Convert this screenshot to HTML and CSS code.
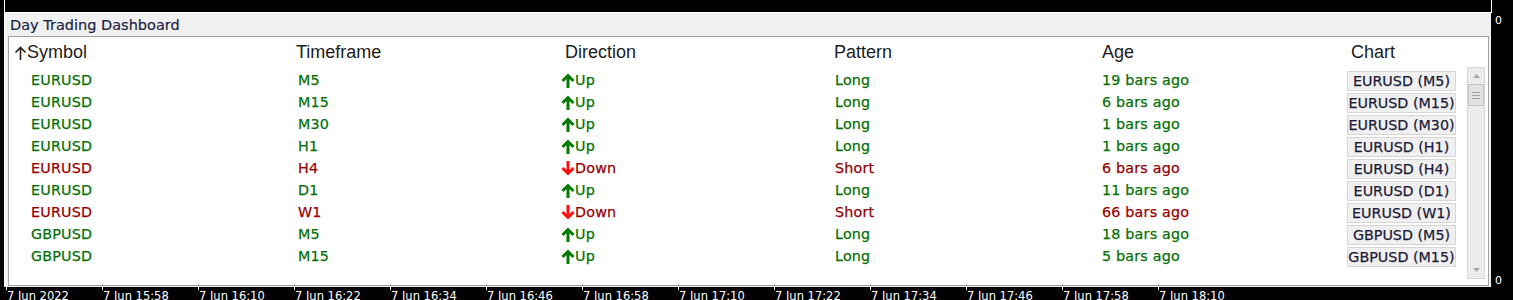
FILE: index.html
```html
<!DOCTYPE html>
<html>
<head>
<meta charset="utf-8">
<link rel="stylesheet" href="styles.css">
</head>
<body>
<div class="screen">
  <div class="main">
    <div class="frame">
      <div class="chart-top"></div>
      <div class="panel">
        <div class="title">Day Trading Dashboard</div>
        <div class="box">
          <div class="grid head">
            <div class="c c1"><svg class="sort" viewBox="0 0 13 16" width="13" height="16"><path d="M6.5 15V2.5M1.5 7.5L6.5 2.5L11.5 7.5" fill="none" stroke="#2a2018" stroke-width="1.6"/></svg>Symbol</div>
            <div class="c c2">Timeframe</div>
            <div class="c c3">Direction</div>
            <div class="c c4">Pattern</div>
            <div class="c c5">Age</div>
            <div class="c c6">Chart</div>
          </div>
          <div class="body">
            <div class="rows">
              <div class="grid row up"><div class="c c1">EURUSD</div><div class="c c2">M5</div><div class="c c3"><svg class="arr" viewBox="0 0 14 15" width="14" height="15"><path d="M7 15V2.5M1.5 8L7 2.5L12.5 8" fill="none" stroke-width="3"/></svg>Up</div><div class="c c4">Long</div><div class="c c5">19 bars ago</div><div class="c c6"><span class="btn">EURUSD (M5)</span></div></div>
              <div class="grid row up"><div class="c c1">EURUSD</div><div class="c c2">M15</div><div class="c c3"><svg class="arr" viewBox="0 0 14 15" width="14" height="15"><path d="M7 15V2.5M1.5 8L7 2.5L12.5 8" fill="none" stroke-width="3"/></svg>Up</div><div class="c c4">Long</div><div class="c c5">6 bars ago</div><div class="c c6"><span class="btn">EURUSD (M15)</span></div></div>
              <div class="grid row up"><div class="c c1">EURUSD</div><div class="c c2">M30</div><div class="c c3"><svg class="arr" viewBox="0 0 14 15" width="14" height="15"><path d="M7 15V2.5M1.5 8L7 2.5L12.5 8" fill="none" stroke-width="3"/></svg>Up</div><div class="c c4">Long</div><div class="c c5">1 bars ago</div><div class="c c6"><span class="btn">EURUSD (M30)</span></div></div>
              <div class="grid row up"><div class="c c1">EURUSD</div><div class="c c2">H1</div><div class="c c3"><svg class="arr" viewBox="0 0 14 15" width="14" height="15"><path d="M7 15V2.5M1.5 8L7 2.5L12.5 8" fill="none" stroke-width="3"/></svg>Up</div><div class="c c4">Long</div><div class="c c5">1 bars ago</div><div class="c c6"><span class="btn">EURUSD (H1)</span></div></div>
              <div class="grid row down"><div class="c c1">EURUSD</div><div class="c c2">H4</div><div class="c c3"><svg class="arr" viewBox="0 0 14 15" width="14" height="15"><path d="M7 0V12.5M1.5 7L7 12.5L12.5 7" fill="none" stroke-width="3"/></svg>Down</div><div class="c c4">Short</div><div class="c c5">6 bars ago</div><div class="c c6"><span class="btn">EURUSD (H4)</span></div></div>
              <div class="grid row up"><div class="c c1">EURUSD</div><div class="c c2">D1</div><div class="c c3"><svg class="arr" viewBox="0 0 14 15" width="14" height="15"><path d="M7 15V2.5M1.5 8L7 2.5L12.5 8" fill="none" stroke-width="3"/></svg>Up</div><div class="c c4">Long</div><div class="c c5">11 bars ago</div><div class="c c6"><span class="btn">EURUSD (D1)</span></div></div>
              <div class="grid row down"><div class="c c1">EURUSD</div><div class="c c2">W1</div><div class="c c3"><svg class="arr" viewBox="0 0 14 15" width="14" height="15"><path d="M7 0V12.5M1.5 7L7 12.5L12.5 7" fill="none" stroke-width="3"/></svg>Down</div><div class="c c4">Short</div><div class="c c5">66 bars ago</div><div class="c c6"><span class="btn">EURUSD (W1)</span></div></div>
              <div class="grid row up"><div class="c c1">GBPUSD</div><div class="c c2">M5</div><div class="c c3"><svg class="arr" viewBox="0 0 14 15" width="14" height="15"><path d="M7 15V2.5M1.5 8L7 2.5L12.5 8" fill="none" stroke-width="3"/></svg>Up</div><div class="c c4">Long</div><div class="c c5">18 bars ago</div><div class="c c6"><span class="btn">GBPUSD (M5)</span></div></div>
              <div class="grid row up"><div class="c c1">GBPUSD</div><div class="c c2">M15</div><div class="c c3"><svg class="arr" viewBox="0 0 14 15" width="14" height="15"><path d="M7 15V2.5M1.5 8L7 2.5L12.5 8" fill="none" stroke-width="3"/></svg>Up</div><div class="c c4">Long</div><div class="c c5">5 bars ago</div><div class="c c6"><span class="btn">GBPUSD (M15)</span></div></div>
            </div>
            <div class="scrollbar">
              <div class="sb-btn"><svg viewBox="0 0 7 4" width="7" height="4"><path d="M0 4L3.5 0L7 4Z" fill="#a8a8a8"/></svg></div>
              <div class="thumb"><i></i><i></i><i></i></div>
              <div class="sb-track"></div>
              <div class="sb-btn"><svg viewBox="0 0 7 4" width="7" height="4"><path d="M0 0L3.5 4L7 0Z" fill="#a8a8a8"/></svg></div>
            </div>
          </div>
        </div>
      </div>
    </div>
    <div class="axis-y"><span>0</span><span class="bottom">0</span></div>
  </div>
  <div class="axis-x">
    <span class="tick">7 Jun 2022</span>
    <span class="tick">7 Jun 15:58</span>
    <span class="tick">7 Jun 16:10</span>
    <span class="tick">7 Jun 16:22</span>
    <span class="tick">7 Jun 16:34</span>
    <span class="tick">7 Jun 16:46</span>
    <span class="tick">7 Jun 16:58</span>
    <span class="tick">7 Jun 17:10</span>
    <span class="tick">7 Jun 17:22</span>
    <span class="tick">7 Jun 17:34</span>
    <span class="tick">7 Jun 17:46</span>
    <span class="tick">7 Jun 17:58</span>
    <span class="tick">7 Jun 18:10</span>
  </div>
</div>
</body>
</html>
```
FILE: styles.css
```css
* { box-sizing: border-box; }
html, body { margin: 0; padding: 0; background: #000; }
.screen { width: 1513px; height: 300px; overflow: hidden; background: #000; }

.main { display: flex; height: 287px; }
.frame { margin-left: 4px; width: 1488px; display: flex; flex-direction: column; }
.chart-top { height: 13px; background: #000; border: 1px solid #fff; border-top: 0; }
.panel {
  width: 1487px; height: 274px; background: #f0f0f0;
  border-left: 1px solid #fff;
  display: flex; flex-direction: column;
}
.title {
  height: 23px; padding-left: 5px; padding-top: 1px;
  font-family: "DejaVu Sans", sans-serif; font-size: 14.5px; line-height: 23px;
  color: #1e2442; -webkit-text-stroke: 0.2px #1e2442;
}
.box {
  margin-left: 3px; width: 1481px; height: 250px;
  background: #fff; border: 1px solid #a0a0a0;
  display: flex; flex-direction: column;
}
.grid {
  display: grid;
  grid-template-columns: 287px 265px 273px 268px 245px 109px;
  align-items: center;
}
.head {
  height: 30px;
  font-family: "Liberation Sans", Arial, sans-serif; font-size: 18px; color: #1c1c1c;
}
.head .c { display: flex; align-items: center; line-height: 30px; }
.head .c1 { padding-left: 5px; }
.head .c3 { padding-left: 4px; }
.head .c6 { padding-left: 4px; }
.sort { display: block; margin-top: 2px; }

.body { display: flex; height: 212px; }
.rows { flex: 1; padding-top: 2px; }
.row {
  height: 22px;
  font-family: "DejaVu Sans", sans-serif; font-size: 14.3px; line-height: 22px;
  letter-spacing: 0.2px;
  white-space: nowrap;
}
.row.up { color: #067006; -webkit-text-stroke: 0.25px #067006; }
.row.down { color: #960000; -webkit-text-stroke: 0.25px #960000; }
.row .c1 { padding-left: 22px; }
.row .c2 { padding-left: 2px; }
.row .c3 { display: flex; align-items: center; }
.row .c4 { padding-left: 1px; }
.arr { display: block; }
.up .arr path { stroke: #057a05; }
.down .arr path { stroke: #ff1010; }

.btn {
  display: flex; justify-content: center; align-items: center;
  width: 109px; height: 20px; margin-top: 1px;
  background: #f0f0f0; border: 1px solid #d6d6d6;
  color: #1c1c38; -webkit-text-stroke: 0.25px #1c1c38;
  font-size: 14.3px; line-height: 18px; letter-spacing: 0;
  overflow: hidden;
}

.scrollbar {
  width: 18px; margin-right: 3px;
  background: #ececec; border: 1px solid #d8d8d8;
  display: flex; flex-direction: column;
}
.sb-btn { height: 16px; display: flex; align-items: center; justify-content: center; }
.sb-btn svg { display: block; }
.thumb {
  height: 22px; background: #e2e2e2; border: 1px solid #c4c4c4;
  display: flex; flex-direction: column; align-items: center; justify-content: center; gap: 2px;
}
.thumb i { display: block; width: 8px; height: 1px; background: #a4a4a4; }
.sb-track { flex: 1; }

.axis-y {
  width: 21px; padding-left: 3px; padding-top: 15px; padding-bottom: 0;
  display: flex; flex-direction: column;
  font-family: "DejaVu Sans", sans-serif; font-size: 11px; line-height: 12px; color: #fff;
}
.axis-y .bottom { margin-top: auto; }

.axis-x {
  display: flex; padding-left: 6px;
  font-family: "DejaVu Sans", sans-serif; font-size: 11.5px; line-height: 12px; color: #fff;
  white-space: nowrap;
}
.tick { width: 96px; flex: none; display: flex; flex-direction: column; text-indent: 1px; }
.tick::before { content: ""; display: block; width: 1px; height: 3px; background: #fff; }
```
